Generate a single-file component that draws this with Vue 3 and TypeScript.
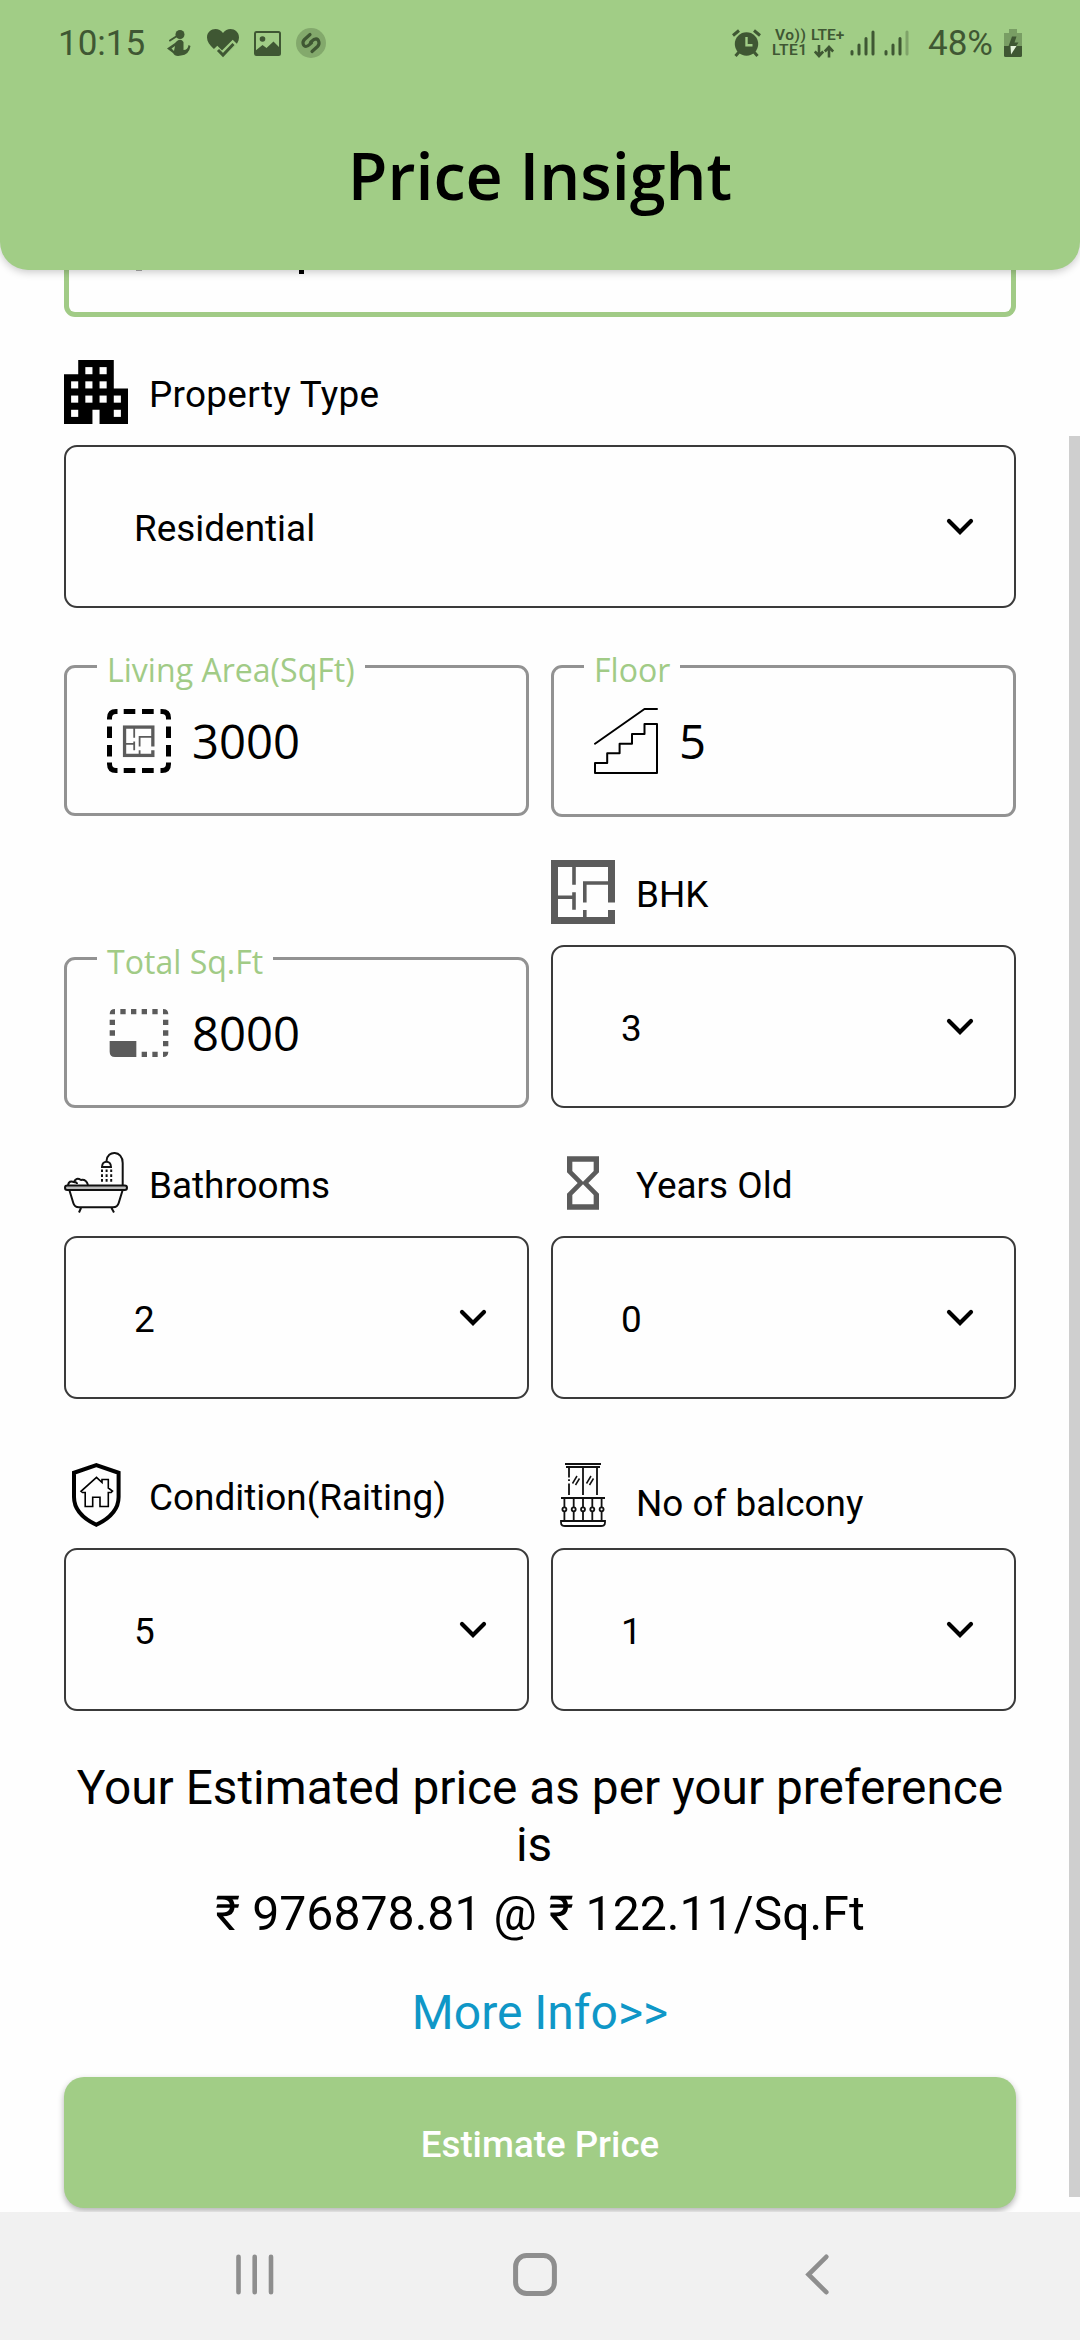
<script setup lang="ts">
import { ref } from 'vue'

const title = 'Price Insight'
const propertyType = ref('Residential')
const livingArea = ref('3000')
const floor = ref('5')
const totalArea = ref('8000')
const bhk = ref('3')
const bathrooms = ref('2')
const yearsOld = ref('0')
const condition = ref('5')
const balconies = ref('1')
const price = ref('976878.81')
const rate = ref('122.11')

const windows: [number, number][] = [
  [3, 1], [5, 1],
  [1, 3], [3, 3], [5, 3],
  [1, 5], [3, 5], [5, 5], [7, 5],
  [1, 7], [7, 7],
]
const balusters = [13.4, 22.7, 32, 41.3, 50.6]
const drops = [38, 42.6, 47.2]
</script>

<template>
  <div class="screen">
    <svg class="defs" width="0" height="0">
      <symbol id="chevron" viewBox="0 0 28 17">
        <path d="M3 3L14 14L25 3" fill="none" stroke="#000" stroke-width="4.2" stroke-linecap="round" />
      </symbol>
      <symbol id="plan" viewBox="0 0 64 64">
        <path
          fill="#5b5b5b"
          d="M0 0H64V42.6H57V24.7H35.6V42.6H32V21.2H57V7H24.8V24.7H21.2V7H7V35.6H21.2V32.3H24.8V49.8H21.2V39H7V57H32V50H35.6V57H57V50H64V64H0Z"
        />
      </symbol>
    </svg>

    <header class="header">
      <div class="status">
        <div class="status-left">
          <span class="clock">10:15</span>
          <svg class="st-person" width="24" height="27" viewBox="0 0 24 27">
            <circle cx="13" cy="4.5" r="4.5" fill="#3f5733" />
            <path d="M10 6L3 10.5" stroke="#3f5733" stroke-width="2" stroke-linecap="round" />
            <path fill="#3f5733" fill-rule="evenodd" d="M10 11Q14 8 16.5 12L16.5 20Q21 20 21.5 15L23.5 16Q22 25 14 25.5Q8 27 6 23L0 18.5L8 13ZM4.500 18.500L7 21L8 16Z" />
          </svg>
          <svg class="st-heart" width="32" height="29" viewBox="0 0 32 29">
            <path fill="#3f5733" d="M16 28C11 22 0 17 0 8.500C0 0 11 -3 16 4C21 -3 32 0 32 8.500C32 17 21 22 16 28Z" />
            <path fill="none" stroke="#a1cd86" stroke-width="6.5" d="M8 19L15 26L28 13" />
            <path fill="none" stroke="#3f5733" stroke-width="3" d="M11 21L16 26L26.500 15" />
          </svg>
          <svg class="st-photo" width="27" height="25" viewBox="0 0 27 25">
            <rect x="1" y="1" width="25" height="23" rx="1.500" fill="none" stroke="#3f5733" stroke-width="2" />
            <circle cx="8.500" cy="8" r="2.800" fill="#3f5733" />
            <path fill="#3f5733" d="M1 20L8.500 14L12.500 17L19.500 10.500L26 17V24H1Z" />
          </svg>
          <svg class="st-music" width="30" height="30" viewBox="0 0 30 30">
            <circle cx="15" cy="15" r="15" fill="#3f5733" fill-opacity=".3" />
            <path
              fill="none" stroke="#3f5733" stroke-width="3.200" stroke-linecap="round"
              d="M14 6.500L8.500 11.500C5.500 14.500 7.500 18.500 10 18.500C12 18.500 13 17 15.500 14.800M16 23.500L21.500 18.500C24.500 15.500 22.500 11 20 10.800C17.500 10.800 16.500 12.500 14.500 14.500"
            />
          </svg>
        </div>
        <div class="status-right">
          <svg width="29" height="28" viewBox="0 0 29 28">
            <circle cx="14.500" cy="15" r="11.700" fill="#3f5733" />
            <path fill="none" stroke="#3f5733" stroke-width="3" d="M1 6.500L7 1.500M28 6.500L22 1.500M7 23L3.500 27M22 23L25.500 27" />
            <path fill="none" stroke="#a1cd86" stroke-width="2.400" d="M14.500 8V16.200H20.500" />
          </svg>
          <div class="net net-volte"><span>Vo))</span><span>LTE1</span></div>
          <div class="net net-lte">
            <span>LTE+</span>
            <svg width="20" height="13" viewBox="0 0 20 13">
              <path fill="none" stroke="#3f5733" stroke-width="2.600" d="M5 0V11M.8 6.500L5 11L9.200 6.500M15 12.500V2M10.800 6.500L15 2L19.200 6.500" />
            </svg>
          </div>
          <svg class="sig" width="25" height="26" viewBox="0 0 25 26">
            <path fill="none" stroke="#3f5733" stroke-width="3" stroke-linecap="round" d="M2 21.500V24M9 15V24M16 8.500V24M23 2V24" />
          </svg>
          <svg class="sig sig-two" width="25" height="26" viewBox="0 0 25 26">
            <path fill="none" stroke="#3f5733" stroke-width="3" stroke-linecap="round" d="M2 21.500V24M9 15V24M16 8.500V24" />
            <path fill="none" stroke="#3f5733" stroke-opacity=".35" stroke-width="3" stroke-linecap="round" d="M23 2V24" />
          </svg>
          <span class="percent">48%</span>
          <svg width="18" height="28" viewBox="0 0 18 28">
            <path fill="#3f5733" fill-opacity=".4" d="M5 0H13V4H18V17H0V4H5Z" />
            <path fill="#3f5733" d="M0 17H18V26.500Q18 28 16.500 28H1.500Q0 28 0 26.500Z" />
            <path fill="#3f5733" d="M8 7.500H12.500L10.500 13.500H14.500L12 17.200H4.500Z" />
            <path fill="#e4f3da" d="M6.500 17H12.500L7 25.500Z" />
          </svg>
        </div>
      </div>
      <h1 class="title">{{ title }}</h1>
    </header>

    <main class="content">
      <div class="address">
        <i class="address-icon"></i>
        <i class="address-text"></i>
      </div>

      <section class="group group-type">
        <div class="label">
          <svg width="64" height="64" viewBox="0 0 9 9">
            <path d="M0 2H2V0H7V4H9V9H5V7H4V9H0Z" />
            <rect v-for="([x, y], i) in windows" :key="i" :x="x" :y="y" width="1" height="1" fill="#fefefe" />
          </svg>
          <span>Property Type</span>
        </div>
        <div class="select"><span>{{ propertyType }}</span><svg width="28" height="17"><use href="#chevron" /></svg></div>
      </section>

      <div class="row row-area">
        <div class="field">
          <label>Living Area(SqFt)</label>
          <svg width="64" height="64" viewBox="0 0 64 64">
            <path
              fill="none" stroke="#000" stroke-width="5"
              d="M2.500 10.500V9Q2.500 2.500 9 2.500H10.500M16.700 2.500H28.300M35 2.500H46.700M53.500 2.500H55Q61.500 2.500 61.500 9V10.500M61.500 17.500V29M61.500 36V47.500M61.500 53.500V55Q61.500 61.500 55 61.500H53.500M46.700 61.500H35M28.300 61.500H16.700M10.500 61.500H9Q2.500 61.500 2.500 55V53.500M2.500 47.500V36M2.500 29V17.500"
            />
            <use href="#plan" x="15.700" y="16.300" width="32" height="32" />
          </svg>
          <span>{{ livingArea }}</span>
        </div>
        <div class="field field-floor">
          <label>Floor</label>
          <svg width="64" height="66" viewBox="0 0 64 66">
            <path
              fill="none" stroke="#000" stroke-width="2" stroke-linejoin="round" stroke-linecap="round"
              d="M1 35.700L50.500 1H63M1 55H13.200V45.300H25.600V35.700H38V26H50.500V16H63V65H1Z"
            />
          </svg>
          <span>{{ floor }}</span>
        </div>
      </div>

      <div class="row row-total">
        <div class="field">
          <label>Total Sq.Ft</label>
          <svg width="64" height="64" viewBox="0 0 24 24" fill="#5b5b5b">
            <path d="M3 3V5H1Q1 3 3 3ZM5 3H7V5H5ZM9 3H11V5H9ZM13 3H15V5H13ZM17 3H19V5H17ZM21 3Q23 3 23 5H21ZM1 7H3V9H1ZM1 11H3V13H1ZM21 7H23V9H21ZM21 11H23V13H21ZM21 15H23V17H21ZM21 19H23Q23 21 21 21ZM17 19H19V21H17ZM13 19H15V21H13ZM1 15H11V21H3Q1 21 1 19Z" />
          </svg>
          <span>{{ totalArea }}</span>
        </div>
        <section class="group">
          <div class="label"><svg width="64" height="64"><use href="#plan" /></svg><span>BHK</span></div>
          <div class="select"><span>{{ bhk }}</span><svg width="28" height="17"><use href="#chevron" /></svg></div>
        </section>
      </div>

      <div class="row row-bath">
        <section class="group">
          <div class="label">
            <svg width="64" height="64" viewBox="0 0 64 64" fill="none" stroke="#111" stroke-width="2">
              <rect x="1" y="34.500" width="62" height="4.600" rx="2.300" fill="#bbb" />
              <path d="M5.500 39.500L9.300 52Q10.500 56.300 15 56.300H49Q53.500 56.300 54.700 52L58.500 39.500M17 57L15 61.500M47.500 57L50 61.500" />
              <path d="M58.700 34V12C58.700 -1 43 -1 42.500 10M38 16C38 9 47 9 47 16ZM4 34Q5 29 10 31Q12 26 17 29Q22 28 24 34M10 31Q13 31 13 33" />
              <path v-for="x in drops" :key="x" :d="`M${x} 18.500V31`" stroke-dasharray="2.600 2.200" />
            </svg>
            <span>Bathrooms</span>
          </div>
          <div class="select"><span>{{ bathrooms }}</span><svg width="28" height="17"><use href="#chevron" /></svg></div>
        </section>
        <section class="group">
          <div class="label">
            <svg width="64" height="64" viewBox="0 0 24 24" fill="#5b5b5b">
              <path d="M6 2v6h.01L6 8.010 10 12l-4 4 .01.010H6V22h12v-5.990h-.01L18 16l-4-4 4-3.990-.01-.010H18V2H6zm10 14.500V20H8v-3.500l4-4 4 4zm-4-5l-4-4V4h8v3.500l-4 4z" />
            </svg>
            <span>Years Old</span>
          </div>
          <div class="select"><span>{{ yearsOld }}</span><svg width="28" height="17"><use href="#chevron" /></svg></div>
        </section>
      </div>

      <div class="row row-condition">
        <section class="group">
          <div class="label">
            <svg width="64" height="64" viewBox="0 0 64 64" fill="none" stroke="#000">
              <path stroke-width="4" d="M32.300 2.200L10 9.800V34C10 46 17 54.500 32.300 61.800C47.600 54.500 54.600 46 54.600 34V9.800Z" />
              <path stroke-width="1.600" d="M32.500 14.300L17 28.300l1.500 1.200h2.700V43.500h7.500V34.300h7.300v9.200h8.300V29.500h2.800l1.400-1.500-4.200-3V16.500h-6.300v3z" />
            </svg>
            <span>Condition(Raiting)</span>
          </div>
          <div class="select"><span>{{ condition }}</span><svg width="28" height="17"><use href="#chevron" /></svg></div>
        </section>
        <section class="group">
          <div class="label label-balcony">
            <svg width="64" height="64" viewBox="0 0 64 64" fill="none" stroke="#111" stroke-width="1.800">
              <path stroke-width="2" d="M14 1H50M15 4H49" />
              <path d="M18 4V14.500M18 16.200V18M18 20.500V32M46 4V32M32 4V32" />
              <path stroke-width="1.500" d="M21.500 20.500L26 13M24.500 22L28.500 15.500M35.500 20.500L40 13M38.500 22L42.500 15.500" />
              <path d="M10 35H54M10 58H54V59.500Q54 63 50 63H14Q10 63 10 59.500Z" />
              <g v-for="x in balusters" :key="x">
                <path :d="`M${x} 36V44M${x} 48.600V58`" />
                <circle :cx="x" cy="46.300" r="2" />
              </g>
            </svg>
            <span>No of balcony</span>
          </div>
          <div class="select"><span>{{ balconies }}</span><svg width="28" height="17"><use href="#chevron" /></svg></div>
        </section>
      </div>

      <p class="estimate">Your Estimated price as per your preference is&nbsp;</p>
      <p class="price">₹ {{ price }} @ ₹ {{ rate }}/Sq.Ft</p>
      <a class="more">More Info&gt;&gt;</a>
      <button class="submit" type="button">Estimate Price</button>
      <div class="scrollbar"></div>
    </main>

    <nav class="nav">
      <svg width="38" height="41" viewBox="0 0 38 41">
        <path fill="none" stroke="#8e8e8e" stroke-width="4.600" stroke-linecap="round" d="M2.500 2.800V38.200M18.700 2.800V38.200M35 2.800V38.200" />
      </svg>
      <svg class="nav-home" width="44" height="43" viewBox="0 0 44 43">
        <rect x="2.600" y="2.600" width="38.800" height="37.800" rx="11" fill="none" stroke="#8e8e8e" stroke-width="5" />
      </svg>
      <svg class="nav-back" width="24" height="41" viewBox="0 0 24 41">
        <path fill="none" stroke="#8e8e8e" stroke-width="4.600" stroke-linecap="round" d="M21.300 2.800L3.500 20.500L21.300 38.200" />
      </svg>
    </nav>
  </div>
</template>

<style>
body {
  margin: 0;
  background: #fefefe;
}
</style>

<style scoped>
.screen {
  display: flex;
  flex-direction: column;
  width: 1080px;
  height: 2340px;
  overflow: hidden;
  background: #fefefe;
  color: #000;
  font-family: Roboto, sans-serif;
}
.screen * {
  box-sizing: border-box;
}
.defs {
  position: absolute;
}
svg {
  display: block;
  flex: none;
}
.header {
  position: relative;
  z-index: 1;
  flex: none;
  height: 270px;
  background: #a1cd86;
  border-radius: 0 0 28px 28px;
  box-shadow: 0 2px 8px rgba(0, 0, 0, 0.22);
}
.status {
  display: flex;
  justify-content: space-between;
  height: 88px;
  padding: 0 58px 2px;
  color: #3f5733;
}
.status-left,
.status-right {
  display: flex;
  align-items: center;
}
.clock,
.percent {
  padding-top: 2px;
  font-size: 35px;
  line-height: 40px;
}
.st-person {
  margin-left: 22px;
}
.st-heart {
  margin-left: 16px;
}
.st-photo,
.st-music {
  margin-left: 15px;
}
.net {
  display: flex;
  flex-direction: column;
  font-size: 15.500px;
  font-weight: 600;
  line-height: 15px;
}
.net-volte {
  width: 35px;
  margin-left: 11px;
  letter-spacing: 0.500px;
}
.net-volte span:first-child {
  padding-left: 3px;
}
.net-lte {
  width: 33px;
  margin-left: 4px;
}
.net-lte svg {
  margin: 2px 0 0 3px;
}
.sig {
  margin-left: 6px;
}
.sig-two {
  margin-left: 9px;
}
.percent {
  margin: 0 11px 0 19px;
}
.title {
  margin: 0;
  padding-top: 42px;
  text-align: center;
  font: 600 64.600px/90px 'Open Sans', sans-serif;
}
.content {
  position: relative;
  display: flex;
  flex-direction: column;
  height: 1942px;
  padding: 0 64px;
  overflow: hidden;
}
.address {
  position: relative;
  flex: none;
  height: 47px;
  border: 5px solid #a1cb86;
  border-top: 0;
  border-radius: 0 0 11px 11px;
}
.address-icon,
.address-text {
  position: absolute;
  top: 0;
}
.address-icon {
  left: 67px;
  width: 6px;
  height: 1px;
  background: #aaa;
}
.address-text {
  left: 230px;
  width: 5px;
  height: 4px;
  background: #000;
}
.group-type {
  margin-top: 43px;
}
.group-type .label {
  letter-spacing: 0.300px;
}
.row {
  display: grid;
  grid-template-columns: 465px 465px;
  column-gap: 22px;
}
.row-area {
  align-items: start;
  margin-top: 57px;
}
.row-total {
  align-items: end;
  margin-top: 43px;
}
.row-bath {
  margin-top: 43px;
}
.row-condition {
  margin-top: 64px;
}
.label {
  display: flex;
  align-items: center;
  gap: 21px;
  height: 64px;
  margin-bottom: 21px;
  font-size: 36.900px;
  line-height: 44px;
}
.label span {
  padding-top: 5px;
}
.label-balcony span {
  padding-top: 17px;
}
.select {
  display: flex;
  align-items: center;
  justify-content: space-between;
  height: 163px;
  padding: 0 40px 0 68px;
  border: 2px solid #3a3a3a;
  border-radius: 13px;
  font-size: 36.900px;
  line-height: 44px;
}
.select span {
  padding-top: 4px;
}
.field {
  position: relative;
  display: flex;
  align-items: center;
  gap: 21px;
  height: 151px;
  padding-left: 40px;
  border: 3px solid #929292;
  border-radius: 11px;
  font: 47.250px/64px 'Open Sans', sans-serif;
}
.field-floor {
  height: 152px;
}
.field label {
  position: absolute;
  top: -20px;
  left: 30px;
  padding: 0 10px;
  background: #fefefe;
  color: #a1cb86;
  font-size: 32.100px;
  line-height: 44px;
}
.estimate,
.price,
.more {
  flex: none;
  margin: 0;
  text-align: center;
  font-size: 47.800px;
  line-height: 57px;
}
.estimate {
  margin-top: 49px;
}
.price {
  margin-top: 11px;
  font-size: 48.200px;
}
.more {
  margin-top: 42px;
  color: #0f97c7;
  font-size: 48px;
}
.submit {
  flex: none;
  height: 131px;
  margin-top: 36px;
  padding: 4px 0 0;
  border: 0;
  border-radius: 20px;
  background: #a1cd86;
  box-shadow: 0 3px 6px rgba(0, 0, 0, 0.3);
  color: #fff;
  font: 500 36.700px Roboto, sans-serif;
}
.scrollbar {
  position: absolute;
  top: 166px;
  right: 0;
  width: 11px;
  height: 1761px;
  background: #cfcfcf;
}
.nav {
  position: relative;
  display: flex;
  align-items: center;
  flex: none;
  height: 128px;
  padding: 0 0 4px 236px;
  background: #f1f1f1;
}
.nav-home {
  margin-left: 239px;
}
.nav-back {
  margin-left: 248px;
}
</style>
